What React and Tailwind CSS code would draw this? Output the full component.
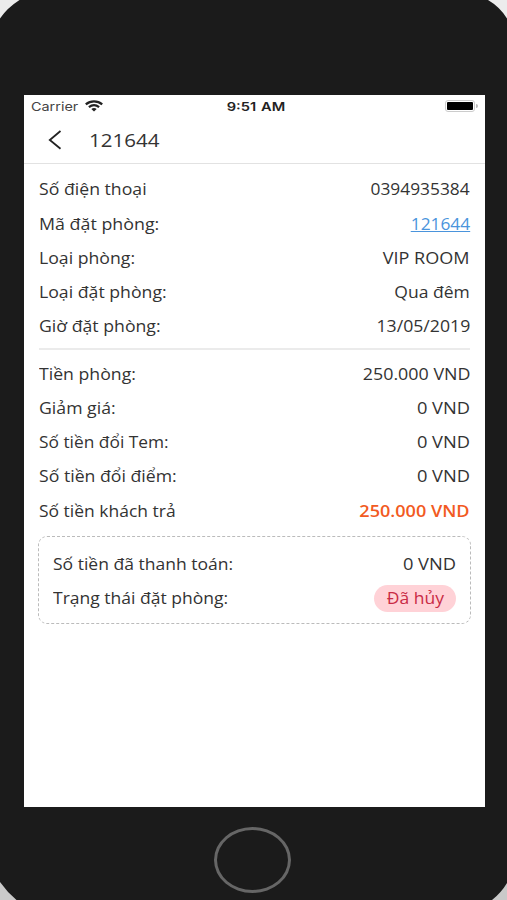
import React from "react";

const bookingRows = [
  ["Số điện thoại", "0394935384", "scale-x-[1.118]"],
  ["Mã đặt phòng:", "121644", "scale-x-[1.118] text-[#4a94dc] underline underline-offset-1", "scale-x-[1.15]"],
  ["Loại phòng:", "VIP ROOM", "scale-x-[1.165]"],
  ["Loại đặt phòng:", "Qua đêm", "scale-x-[1.13]"],
  ["Giờ đặt phòng:", "13/05/2019", "scale-x-[1.14]"],
];

const paymentRows = [
  ["Tiền phòng:", "250.000 VND", "scale-x-[1.152]"],
  ["Giảm giá:", "0 VND", "scale-x-[1.18]"],
  ["Số tiền đổi Tem:", "0 VND", "scale-x-[1.18]", "scale-x-[1.118]"],
  ["Số tiền đổi điểm:", "0 VND", "scale-x-[1.18]"],
  ["Số tiền khách trả", "250.000 VND", "scale-x-[1.166] font-semibold text-[#f25a22]", "scale-x-[1.127]"],
];

function Row({ label, labelScale = "scale-x-[1.14]", children }) {
  return (
    <div className="flex h-[34.2px] items-center justify-between whitespace-nowrap">
      <span className={"origin-left " + labelScale}>{label}</span>
      {children}
    </div>
  );
}

function Rows({ items }) {
  return items.map(([label, value, style, labelScale]) => (
    <Row key={label} label={label} labelScale={labelScale}>
      <span className={"origin-right " + style}>{value}</span>
    </Row>
  ));
}

function Wifi() {
  return (
    <svg className="ml-[7px] h-[12px] w-[18px]" viewBox="0 0 18 12" fill="none" stroke="#222" strokeWidth="2.3">
      <path d="M.8 4.3C5.5.4 12.5.4 17.2 4.3" />
      <path d="M3.9 7.1C7 4.7 11 4.7 14.1 7.1" />
      <path d="M6.3 8.9Q9 7.2 11.7 8.9L9 11.5Z" fill="#222" stroke="none" />
    </svg>
  );
}

export default function App() {
  return (
    <div className="relative flex h-[900px] w-[507px] flex-col overflow-hidden bg-[#1b1b1b] pt-[95px]">
      <svg className="absolute top-0 left-0 h-[19px] w-[20px]" viewBox="0 0 20 19">
        <path d="M0 0H19.5Q7 8 0 18.5Z" fill="#ececec" />
      </svg>
      <svg className="absolute top-0 right-0 h-[19px] w-[19px]" viewBox="0 0 19 19">
        <path d="M19 0H0Q12 7 19 18.5Z" fill="#ececec" />
      </svg>
      <svg className="absolute bottom-0 left-0 h-[18px] w-[17px]" viewBox="0 0 17 18">
        <path d="M0 0Q7 10 16.5 18H0Z" fill="#c9c9c9" />
      </svg>
      <svg className="absolute right-0 bottom-0 h-[18px] w-[17px]" viewBox="0 0 17 18">
        <path d="M17 1Q11 11 2 18H17Z" fill="#c9c9c9" />
      </svg>

      <main className="ml-[23.7px] h-[712px] w-[461.8px] bg-white font-['Open_Sans','Noto_Sans',sans-serif] text-[15.5px] text-[#333]">
        <div className="grid h-[22px] grid-cols-3 items-center pr-[7px] pl-[7.5px] font-[Inter,sans-serif] text-[12px] leading-none">
          <div className="flex items-center text-[#444]">
            <span className="w-[47px] pt-px">
              <span className="inline-block origin-left scale-x-[1.2]">Carrier</span>
            </span>
            <Wifi />
          </div>
          <div className="flex justify-center pt-px pl-[3px]">
            <span className="scale-x-[1.22] font-semibold [word-spacing:1px] text-[#222]">9:51 AM</span>
          </div>
          <div className="flex items-center justify-end gap-px">
            <span className="flex h-[12px] w-[30px] items-center justify-center rounded-[3px] border border-[#ccc]">
              <span className="h-[8px] w-[26px] rounded-[1px] bg-black" />
            </span>
            <span className="h-[4px] w-[2px] rounded-r-full bg-[#bbb]" />
          </div>
        </div>

        <header className="flex h-[47px] items-center border-b border-[#e2e2e2] pb-[1px] pl-[24px]">
          <svg className="h-[20px] w-[14px]" viewBox="0 0 14 20" fill="none" stroke="#222" strokeWidth="1.8">
            <path d="M12.5 1L1.8 10L12.5 18.8" />
          </svg>
          <h1 className="ml-[27px] origin-left scale-x-[1.14] text-[18px] leading-none text-[#333]">121644</h1>
        </header>

        <section className="mr-[15.5px] ml-[15px] border-b-2 border-[#ebebeb] pt-[9px] pb-[4.4px]">
          <Rows items={bookingRows} />
        </section>
        <section className="mr-[15.5px] ml-[15px] pt-[7px]">
          <Rows items={paymentRows} />
        </section>
        <section className="mx-[14.5px] mt-[8.2px] h-[88px] rounded-[9px] border border-dashed border-[#bbb] px-[14px] pt-[10px]">
          <Row label="Số tiền đã thanh toán:" labelScale="scale-x-[1.13]">
            <span className="origin-right scale-x-[1.18]">0 VND</span>
          </Row>
          <Row label="Trạng thái đặt phòng:" labelScale="scale-x-[1.13]">
            <span className="-mt-px flex h-[27px] w-[82px] items-center justify-center rounded-full bg-[#ffd2d7] text-[#c92a45]">
              <span className="scale-x-[1.13] pt-px">Đã hủy</span>
            </span>
          </Row>
        </section>
      </main>

      <div className="mt-[20px] ml-[214px] h-[66px] w-[77px] rounded-[50%] border-[3px] border-[#666]" />
    </div>
  );
}
